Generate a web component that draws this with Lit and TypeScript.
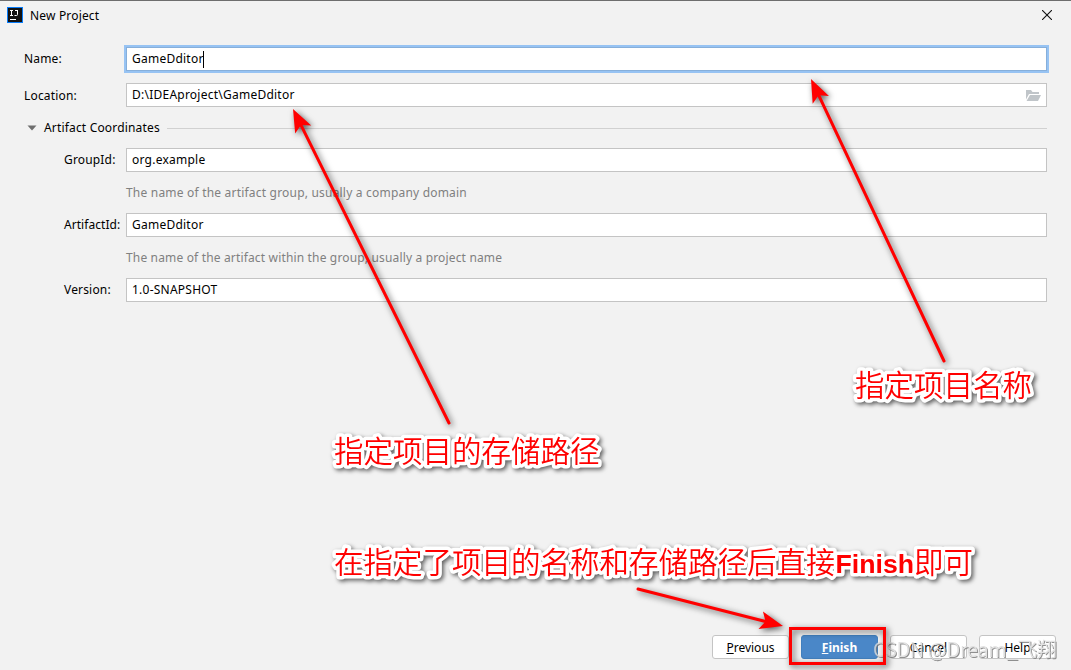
import { LitElement, html, svg, css } from "lit";
import { customElement, property } from "lit/decorators.js";

@customElement("form-row")
export class FormRow extends LitElement {
  @property() label = "";
  @property() value = "";
  @property({ type: Boolean, reflect: true }) focused = false;
  @property({ type: Boolean, reflect: true }) indent = false;
  @property({ type: Boolean, reflect: true }) browse = false;

  static styles = css`
    :host {
      display: flex;
      align-items: center;
      height: 24px;
      padding-left: 24px;
    }

    :host([indent]) {
      padding-left: 64px;
    }

    .label {
      width: 102px;
      white-space: nowrap;
    }

    :host([indent]) .label {
      width: 62px;
    }

    :host([browse]) .label {
      padding-top: 2px;
    }

    .field {
      flex: 1;
      display: flex;
      align-items: center;
      height: 24px;
      box-sizing: border-box;
      margin-right: 24px;
      padding: 0 5px;
      border: 1px solid #c4c4c4;
      background: #fff;
      letter-spacing: 0.24px;
    }

    :host([focused]) .field {
      border-color: #87afda;
      box-shadow: 0 0 0 2px #97c3f3;
    }

    .caret {
      width: 1px;
      height: 17px;
      margin-left: -1px;
      background: #000;
    }

    .folder {
      margin-left: auto;
    }
  `;

  render() {
    return html`
      <span class="label">${this.label}</span>
      <div class="field">
        <span>${this.value}</span>
        ${this.focused ? html`<i class="caret"></i>` : ""}
        ${this.browse
          ? html`<svg class="folder" width="15" height="11" viewBox="0 0 15 11">
              <path fill="#c0c5c9" d="M0 0h5l1.500 2H13v2H3L0 9.500z M4 5h11l-3 6H.5z" />
            </svg>`
          : ""}
      </div>
    `;
  }
}

@customElement("app-root")
export class AppRoot extends LitElement {
  static styles = css`
    :host {
      display: block;
      font-family: "Noto Sans", "Noto Sans CJK SC", sans-serif;
      font-size: 12px;
      line-height: 18px;
      letter-spacing: 0.17px;
      color: #000;
    }

    .window {
      position: relative;
      display: flex;
      flex-direction: column;
      width: 1071px;
      height: 670px;
      box-sizing: border-box;
      overflow: hidden;
      border-top: 1px solid #6e6e6e;
      background: #f2f2f2;
    }

    .titlebar {
      display: flex;
      align-items: center;
      gap: 7px;
      height: 28px;
      padding: 0 19px 0 7px;
    }

    .title {
      padding-top: 2px;
    }

    .close {
      margin-left: auto;
    }

    .form {
      display: flex;
      flex-direction: column;
      padding-top: 18px;
    }

    .location {
      margin-top: 12px;
    }

    .tight {
      letter-spacing: 0.05px;
    }

    .section {
      display: flex;
      align-items: center;
      gap: 7px;
      height: 18px;
      margin: 12px 24px 11px 27px;
    }

    .section::after {
      content: "";
      flex: 1;
      height: 1px;
      background: #d1d1d1;
    }

    .hint {
      height: 41px;
      line-height: 41px;
      padding-left: 126px;
      color: #808080;
      letter-spacing: 0.2px;
    }

    .within {
      letter-spacing: 0.16px;
    }

    .buttons {
      display: flex;
      justify-content: flex-end;
      gap: 12px;
      margin-top: auto;
      padding: 0 15px 11px 0;
    }

    button {
      width: 77px;
      height: 24px;
      padding: 2px 0 0;
      border: 1px solid #c4c4c4;
      border-radius: 3px;
      background: #fff;
      font: inherit;
      color: #000;
    }

    button.primary {
      border-color: #4280bf;
      background: #4a87c8;
      color: #fff;
      font-weight: 700;
    }

    .overlay {
      position: absolute;
      left: 0;
      top: -1px;
      letter-spacing: 0;
    }

    .arrow,
    .frame {
      filter: drop-shadow(2px 2px 3px rgba(0, 0, 0, 0.65));
    }

    .note {
      font-family: "Liberation Sans", "Noto Sans CJK SC", sans-serif;
      font-size: 29.5px;
      font-weight: 350;
      fill: #f00;
      stroke: #fff;
      stroke-width: 7px;
      stroke-linejoin: round;
      paint-order: stroke;
      filter: drop-shadow(2px 2px 2px rgba(0, 0, 0, 0.6));
    }

    .latin {
      font-size: 26.7px;
      font-weight: 700;
    }

    .watermark {
      font-family: "Noto Sans CJK SC", sans-serif;
      font-size: 20px;
      font-weight: 350;
      fill: #dcdcdc;
      opacity: 0.8;
      filter: drop-shadow(1px 1px 0 #777);
    }
  `;

  arrow(x1: number, y1: number, x2: number, y2: number) {
    const angle = (Math.atan2(y2 - y1, x2 - x1) * 180) / Math.PI;
    const length = Math.hypot(x2 - x1, y2 - y1);
    return svg`
      <g class="arrow">
        <g transform="translate(${x2} ${y2}) rotate(${angle})">
          <path d="M${-length} 0H-16" stroke="#f00" stroke-width="3" stroke-linecap="round" />
          <path d="M0 0L-23 9L-18 0L-23 -9Z" fill="#f00" />
        </g>
      </g>
    `;
  }

  render() {
    return html`
      <div class="window">
        <div class="titlebar">
          <svg width="16" height="16" viewBox="0 0 16 16">
            <rect width="16" height="16" fill="#087cfa" />
            <rect x="1" y="1" width="14" height="14" fill="#111" />
            <path
              d="M3 3.500h3M4.500 3v5M3 8.500h3M8 3.500h3M10.500 3v4.500q0 1-1 1H7.500"
              fill="none"
              stroke="#fff"
            />
            <path d="M3 12.500h6" stroke="#fff" />
          </svg>
          <span class="title">New Project</span>
          <svg class="close" width="10" height="10" viewBox="0 0 10 10">
            <path d="M0 0l10 10M10 0L0 10" stroke="#111" stroke-width="1.1" />
          </svg>
        </div>

        <div class="form">
          <form-row label="Name:" value="GameDditor" focused></form-row>
          <form-row class="location" label="Location:" value="D:\\IDEAproject\\GameDditor" browse></form-row>
          <div class="section">
            <svg width="10" height="6" viewBox="0 0 10 6"><path d="M.5 .5h9L5 5.500z" fill="#6e6e6e" /></svg>
            <span>Artifact Coordinates</span>
          </div>
          <form-row label="GroupId:" value="org.example" indent></form-row>
          <div class="hint">The name of the artifact group, usually a company domain</div>
          <form-row class="tight" label="ArtifactId:" value="GameDditor" indent></form-row>
          <div class="hint within">The name of the artifact within the group, usually a project name</div>
          <form-row label="Version:" value="1.0-SNAPSHOT" indent></form-row>
        </div>

        <div class="buttons">
          <button><u>P</u>revious</button>
          <button class="primary"><u>F</u>inish</button>
          <button>Cancel</button>
          <button>Help</button>
        </div>

        <svg class="overlay" width="1071" height="670" viewBox="0 0 1071 670">
          <text class="watermark" x="873" y="657" textLength="184">CSDN @Dream_飞翔</text>
          ${this.arrow(449, 423, 293, 109)}
          ${this.arrow(944, 361, 811, 79)}
          ${this.arrow(638, 589, 783, 626)}
          <rect class="frame" x="790.500" y="628.500" width="94" height="35" fill="none" stroke="#f00" stroke-width="3" />
          <text class="note" x="334" y="462">指定项目的存储路径</text>
          <text class="note" x="855" y="396">指定项目名称</text>
          <text class="note" x="334" y="573">在指定了项目的名称和存储路径后直接<tspan class="latin">Finish</tspan>即可</text>
        </svg>
      </div>
    `;
  }
}
